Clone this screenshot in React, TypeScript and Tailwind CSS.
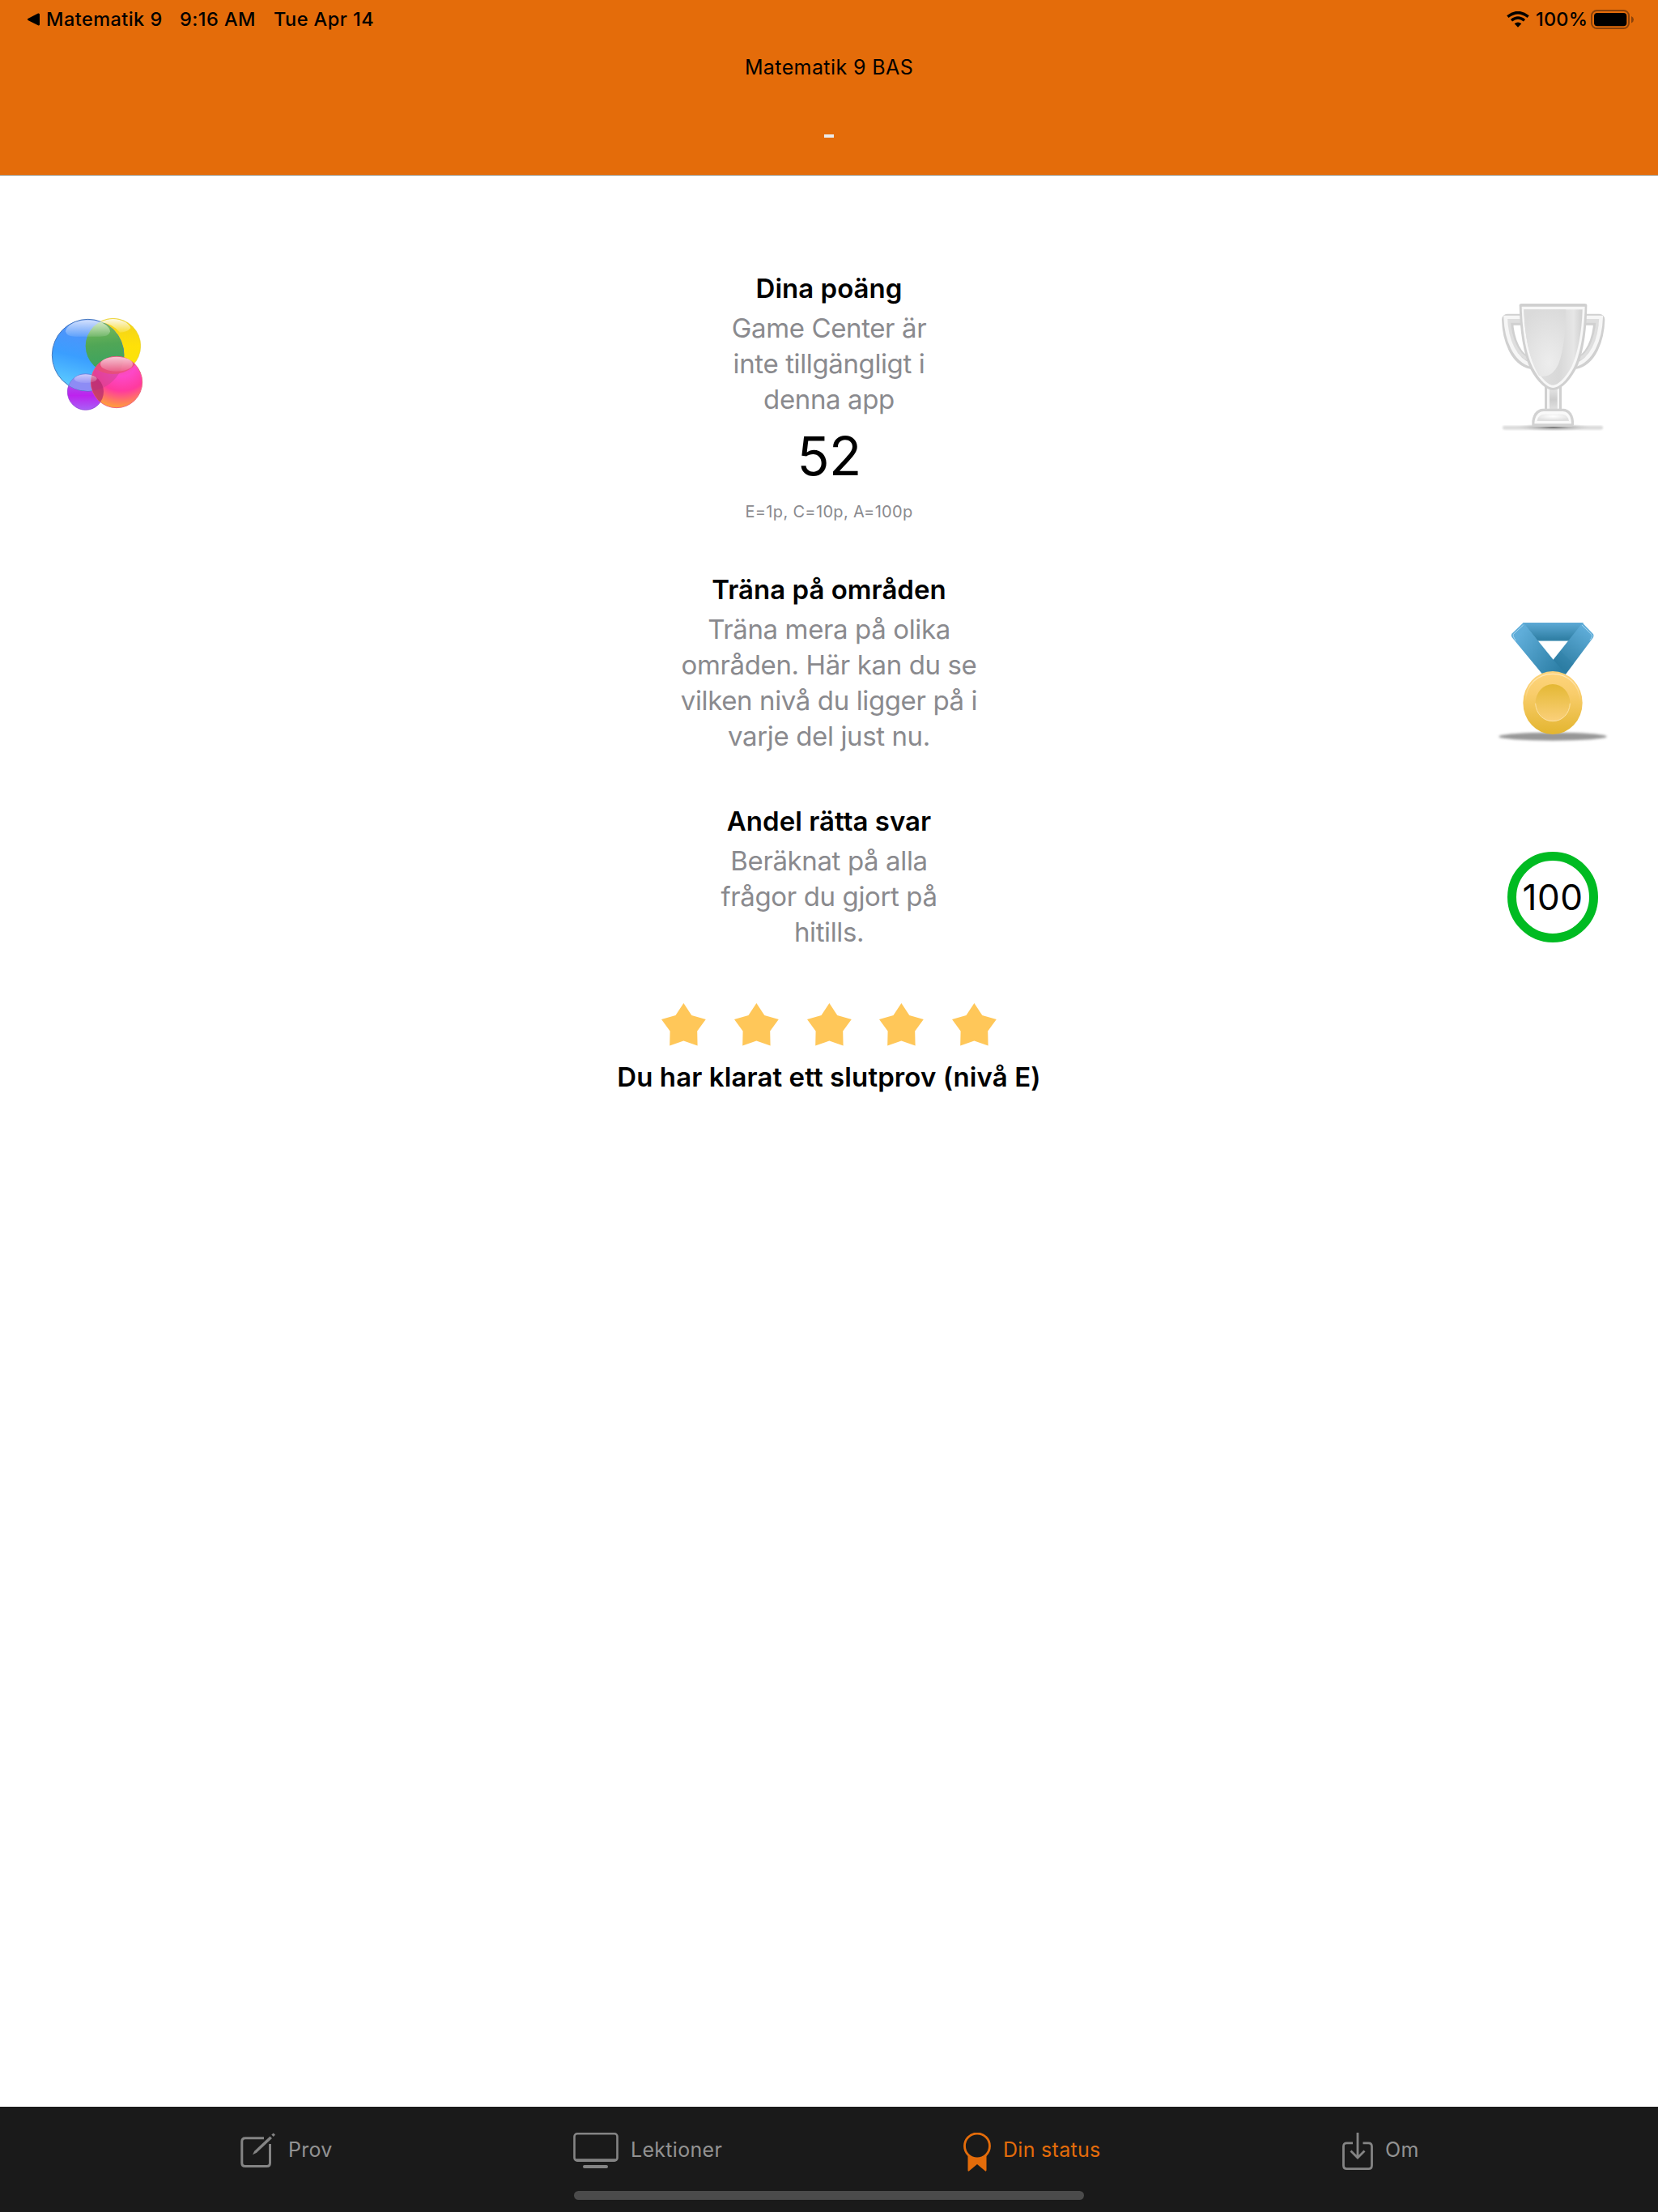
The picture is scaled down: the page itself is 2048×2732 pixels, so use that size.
import type { ReactNode } from "react";

function WifiIcon() {
  return (
    <svg className="w-7 h-5" viewBox="0 0 84 60" fill="none" stroke="#000">
      <path d="M4 20 Q42 -10 80 20" strokeWidth="11" />
      <path d="M18 34 Q42 14 66 34" strokeWidth="10" />
      <path d="M29 46 Q42 35 55 46 L42 59 Z" fill="#000" stroke="none" />
    </svg>
  );
}

function BatteryIcon() {
  return (
    <svg className="w-[53px] h-6" viewBox="0 0 53 24">
      <rect x="1" y="1" width="46" height="22" rx="6.5" fill="none" stroke="#8a420a" strokeWidth="2" />
      <rect x="4" y="4" width="40.3" height="16.3" rx="4" fill="#000" />
      <path d="M50 8 Q53 9.5 53 12.2 Q53 15 50 16.5 Z" fill="#8a420a" />
    </svg>
  );
}

function GameCenterIcon() {
  return (
    <svg className="w-40 h-40" viewBox="0 0 480 480">
      <defs>
        <linearGradient id="gcBlue" x1="0.6" y1="0" x2="0.35" y2="1">
          <stop offset="0" stopColor="#5b8df8" />
          <stop offset="0.55" stopColor="#3a9eff" />
          <stop offset="1" stopColor="#5fd0ff" />
        </linearGradient>
        <linearGradient id="gcYellow" x1="0" y1="0" x2="0" y2="1">
          <stop offset="0" stopColor="#f0d020" />
          <stop offset="0.5" stopColor="#ffe108" />
          <stop offset="1" stopColor="#f8e408" />
        </linearGradient>
        <linearGradient id="gcGreen" x1="0" y1="0" x2="0.1" y2="1">
          <stop offset="0" stopColor="#84c05c" />
          <stop offset="0.5" stopColor="#50a656" />
          <stop offset="1" stopColor="#38a362" />
        </linearGradient>
        <radialGradient id="gcPink" cx="0.6" cy="0.1" r="0.95">
          <stop offset="0" stopColor="#f2549c" />
          <stop offset="0.3" stopColor="#fd48c8" />
          <stop offset="0.6" stopColor="#ff3a9e" />
          <stop offset="0.95" stopColor="#ffa03a" />
        </radialGradient>
        <linearGradient id="gcPurple" x1="0" y1="0" x2="0" y2="1">
          <stop offset="0" stopColor="#a070e8" />
          <stop offset="0.6" stopColor="#bd22ee" />
          <stop offset="1" stopColor="#a860f6" />
        </linearGradient>
        <linearGradient id="gcGloss" x1="0" y1="0" x2="0" y2="1">
          <stop offset="0" stopColor="#fff" stopOpacity="0.9" />
          <stop offset="1" stopColor="#fff" stopOpacity="0.15" />
        </linearGradient>
        <clipPath id="gcClipBlue"><circle cx="206" cy="206" r="133" /></clipPath>
        <clipPath id="gcClipPink"><circle cx="312" cy="306" r="95" /></clipPath>
        <clipPath id="gcClipPurple"><circle cx="197" cy="342" r="67" /></clipPath>
      </defs>
      <circle cx="299" cy="172" r="102" fill="url(#gcYellow)" stroke="#e6cf25" strokeWidth="2" />
      <circle cx="197" cy="342" r="67" fill="url(#gcPurple)" stroke="#8a3bd0" strokeWidth="2" />
      <circle cx="206" cy="206" r="133" fill="url(#gcBlue)" stroke="#4778bd" strokeWidth="3" />
      <g clipPath="url(#gcClipBlue)">
        <circle cx="299" cy="172" r="102" fill="url(#gcGreen)" />
        <circle cx="197" cy="342" r="67" fill="#8d8cf5" stroke="#6a7bd8" strokeWidth="2" />
      </g>
      <path d="M123 118 C126 94 165 76 206 76 C247 76 286 94 288 118 C284 134 270 137 250 137 H160 C138 137 126 132 123 118Z" fill="url(#gcGloss)" opacity="0.8" />
      <path d="M250 84 Q300 60 346 84 Q364 97 364 106 Q350 122 324 122 Q296 88 250 84Z" fill="url(#gcGloss)" />
      <circle cx="312" cy="306" r="95" fill="url(#gcPink)" stroke="#ee6580" strokeWidth="3" />
      <g clipPath="url(#gcClipPink)">
        <circle cx="206" cy="206" r="133" fill="#cc4590" opacity="0.55" />
        <ellipse cx="299" cy="190" rx="102" ry="86" fill="#e8506e" opacity="0.75" />
        <circle cx="197" cy="342" r="67" fill="#b52870" opacity="0.75" />
      </g>
      <g clipPath="url(#gcClipPurple)">
        <ellipse cx="197" cy="293" rx="42" ry="16" fill="url(#gcGloss)" opacity="0.6" />
      </g>
      <ellipse cx="312" cy="239" rx="60" ry="27" fill="url(#gcGloss)" opacity="0.75" />
    </svg>
  );
}

function TrophyIcon() {
  return (
    <svg className="w-[180px] h-[200px]" viewBox="0 0 540 600">
      <defs>
        <linearGradient id="trCup" x1="0" y1="0" x2="1" y2="0">
          <stop offset="0" stopColor="#d2d2d2" />
          <stop offset="0.3" stopColor="#dedede" />
          <stop offset="0.6" stopColor="#d8d8d8" />
          <stop offset="0.85" stopColor="#e6e6e6" />
          <stop offset="1" stopColor="#d0d0d0" />
        </linearGradient>
        <radialGradient id="trShine" cx="0.6" cy="0.8" r="0.85">
          <stop offset="0" stopColor="#ededed" />
          <stop offset="1" stopColor="#dadada" />
        </radialGradient>
        <linearGradient id="trStem" x1="0" y1="0" x2="0" y2="1">
          <stop offset="0" stopColor="#e6e6e6" />
          <stop offset="0.5" stopColor="#cdcdcd" />
          <stop offset="1" stopColor="#e4e4e4" />
        </linearGradient>
        <radialGradient id="trBase" cx="0.5" cy="0.3" r="0.6">
          <stop offset="0" stopColor="#fff" />
          <stop offset="1" stopColor="#e0e0e0" />
        </radialGradient>
        <radialGradient id="trShadow">
          <stop offset="0" stopColor="#6a6a6a" />
          <stop offset="0.4" stopColor="#9a9a9a" stopOpacity="0.6" />
          <stop offset="1" stopColor="#d0d0d0" stopOpacity="0" />
        </radialGradient>
        <filter id="trBlur"><feGaussianBlur stdDeviation="3" /></filter>
      </defs>
      <rect x="78" y="527" width="372" height="15" rx="7" fill="#dcdcdc" filter="url(#trBlur)" />
      <ellipse cx="266" cy="533" rx="140" ry="15" fill="url(#trShadow)" />
      {/* handles */}
      <path d="M150 134 H96 C98 210 128 285 185 297" fill="none" stroke="#d0d0d0" strokeWidth="42" strokeLinejoin="round" />
      <path d="M384 134 H436 C434 210 404 285 347 297" fill="none" stroke="#d0d0d0" strokeWidth="42" strokeLinejoin="round" />
      <path d="M150 140 H102 C106 204 132 266 172 280" fill="none" stroke="#dedede" strokeWidth="12" />
      <path d="M384 140 H430 C426 204 400 266 360 280" fill="none" stroke="#dedede" strokeWidth="12" />
      <path d="M150 126 H89 C92 210 124 285 185 303" fill="none" stroke="#f6f6f6" strokeWidth="14" />
      <path d="M384 126 H443 C440 210 408 285 347 303" fill="none" stroke="#f6f6f6" strokeWidth="14" />
      {/* stem and foot */}
      <rect x="234" y="375" width="63" height="100" fill="#d0d0d0" />
      <rect x="243" y="375" width="45" height="100" fill="#f6f6f6" />
      <rect x="252" y="385" width="29" height="90" fill="url(#trStem)" />
      <path d="M187 529 V510 C190 484 206 464 228 464 H302 C324 464 340 484 342 510 V523 Q342 529 334 531 H194 Z" fill="#d2d2d2" />
      <path d="M196 520 C197 490 212 474 230 474 H300 C320 474 332 490 333 520 Z" fill="#fafafa" />
      <path d="M206 510 C208 494 218 485 234 485 H298 C314 485 322 496 324 510 Z" fill="url(#trBase)" />
      {/* cup */}
      <path d="M140 82 Q140 75 148 75 H383 Q391 75 391 82 C390 180 375 270 350 318 C320 372 288 396 265 396 C242 396 208 370 180 316 C156 262 142 180 140 82Z" fill="#d0d0d0" />
      <path d="M149 86 H383 C380 185 365 265 342 312 C315 363 285 387 265 387 C246 387 216 362 190 312 C166 262 152 190 149 86Z" fill="#f7f7f7" />
      <path d="M157 97 H374 C372 180 357 260 334 308 C310 352 283 377 265 377 C250 377 222 356 198 308 C173 260 160 180 157 97Z" fill="url(#trCup)" />
      <path d="M157 97 H312 C312 180 304 250 285 299 C268 334 245 351 213 342 C173 280 160 180 157 97Z" fill="url(#trShine)" />
    </svg>
  );
}

function MedalIcon() {
  return (
    <svg className="w-[180px] h-[180px]" viewBox="0 0 540 540">
      <defs>
        <linearGradient id="mdTop" x1="0" y1="0" x2="0" y2="1">
          <stop offset="0" stopColor="#5daad6" />
          <stop offset="1" stopColor="#2b7ba0" />
        </linearGradient>
        <linearGradient id="mdLeft" gradientUnits="userSpaceOnUse" x1="130" y1="120" x2="290" y2="230">
          <stop offset="0" stopColor="#5fadd9" />
          <stop offset="1" stopColor="#2d7fa6" />
        </linearGradient>
        <linearGradient id="mdRight" gradientUnits="userSpaceOnUse" x1="390" y1="80" x2="290" y2="230">
          <stop offset="0" stopColor="#5fadd9" />
          <stop offset="1" stopColor="#2a7a9f" />
        </linearGradient>
        <linearGradient id="mdGold" x1="0" y1="0" x2="0" y2="1">
          <stop offset="0" stopColor="#fdd47c" />
          <stop offset="0.35" stopColor="#f9cd6c" />
          <stop offset="1" stopColor="#e3b52f" />
        </linearGradient>
        <linearGradient id="mdInner" x1="0" y1="0" x2="0" y2="1">
          <stop offset="0" stopColor="#e4b834" />
          <stop offset="1" stopColor="#fbd07a" />
        </linearGradient>
        <linearGradient id="mdEdge" x1="0" y1="0" x2="0" y2="1">
          <stop offset="0" stopColor="#ffe9ba" />
          <stop offset="1" stopColor="#ffe9ba" stopOpacity="0" />
        </linearGradient>
        <filter id="mdBlur" x="-10%" y="-60%" width="120%" height="220%"><feGaussianBlur stdDeviation="5" /></filter>
      </defs>
      <ellipse cx="264" cy="479" rx="200" ry="15" fill="#979797" filter="url(#mdBlur)" />
      <path d="M153 57 H378 L325 125 H208Z" fill="url(#mdTop)" />
      <path d="M208 124 H324" stroke="#9cc8dd" strokeWidth="2" />
      <path d="M374 58 L413 98 Q418 104 413 113 L312 248 H225 L266 194Z" fill="url(#mdRight)" />
      <path d="M155 57 L112 98 Q108 104 113 112 L224 246 H312 L266 194Z" fill="url(#mdLeft)" />
      <path d="M266 194 L312 246 L341 210 L292 162Z" fill="#2b7da4" opacity="0.3" />
      <path d="M155 66 L118 100 Q115 106 127 124" fill="none" stroke="#a8d6f0" strokeWidth="3" />
      <path d="M372 66 L408 101 Q413 107 402 122" fill="none" stroke="#a8d6f0" strokeWidth="3" />
      <ellipse cx="264" cy="354" rx="110" ry="117" fill="url(#mdGold)" />
      <path d="M163 348 C165 285 210 247 264 247 C318 247 363 285 366 348" fill="none" stroke="url(#mdEdge)" strokeWidth="4" />
      <ellipse cx="264" cy="354" rx="64" ry="69" fill="url(#mdInner)" />
      <path d="M200 356 C202 396 230 422 264 422 C298 422 326 396 328 356" fill="none" stroke="#fde2a4" strokeWidth="3" />
    </svg>
  );
}

function StarIcon() {
  return (
    <svg className="w-[55px] h-[53px]" viewBox="0 0 55 53" fill="#ffc759">
      <path d="M27.4 0 L37.3 15 L54.8 20 L44.2 34.5 L44.6 52.5 L27.4 46.5 L10.2 52.5 L10.6 34.5 L0 20 L17.5 15Z" />
    </svg>
  );
}

function ProvIcon() {
  return (
    <svg className="w-11 h-12" viewBox="0 0 44 48" fill="none" stroke="#848484" strokeWidth="3">
      <path d="M29 6.8 H6 Q1.8 6.8 1.8 11 V37.5 Q1.8 41.5 6 41.5 H32.5 Q36.5 41.5 36.5 37.5 V14" />
      <path d="M36.5 4.5 L39 7 L20 24.7 L15 27.3 L17.2 22.8Z" fill="#848484" stroke="none" />
      <path d="M38.3 2.6 L40.8 0.5 L43 2.7 L40.8 5.1Z" fill="#848484" stroke="none" />
    </svg>
  );
}

function LektionerIcon() {
  return (
    <svg className="w-14 h-12" viewBox="0 0 56 48" fill="none" stroke="#848484" strokeWidth="2.6">
      <rect x="1.5" y="1.3" width="53" height="33.4" rx="3.5" />
      <path d="M2 33.5 H54" />
      <path d="M14 42 H41" strokeWidth="4" strokeLinecap="round" />
    </svg>
  );
}

function StatusIcon() {
  return (
    <svg className="w-[34px] h-12" viewBox="0 0 34 48" fill="none" stroke="#e46c0a">
      <path d="M5.5 27 Q17 36 28.5 27 V46.5 Q28 48.5 26.5 47 L17 39 L7.5 47 Q5.5 48.5 5.5 46.5Z" fill="#e46c0a" stroke="none" />
      <circle cx="17" cy="16.5" r="15.5" strokeWidth="2.8" fill="#1a1a1a" />
    </svg>
  );
}

function OmIcon() {
  return (
    <svg className="w-[38px] h-12" viewBox="0 0 38 48" fill="none" stroke="#848484" strokeWidth="2.8">
      <path d="M13 12.8 H5.5 Q1.5 12.8 1.5 17 V40.5 Q1.5 44.6 5.5 44.6 H32.5 Q36.5 44.6 36.5 40.5 V17 Q36.5 12.8 32.5 12.8 H25.5" />
      <path d="M19 0 V30 M10.5 22.5 L19 31 L27.5 22.5" />
    </svg>
  );
}

interface StatusSectionProps {
  title: string;
  lines: string[];
  left?: ReactNode;
  right: ReactNode;
  className?: string;
  children?: ReactNode;
}

function StatusSection({ title, lines, left, right, className = "", children }: StatusSectionProps) {
  return (
    <section className={`grid grid-cols-[218px_1fr_218px] items-start ${className}`}>
      <div className="pl-10">{left}</div>
      <div className="flex flex-col items-center text-center">
        <h2 className="text-[33px] leading-[44px] font-semibold tracking-[0.02px]">{title}</h2>
        <p className="mt-[5px] text-[33px] leading-[44px] tracking-[-0.38px] text-[#8a8a8e]">
          {lines.map((line) => (
            <span key={line} className="block">{line}</span>
          ))}
        </p>
        {children}
      </div>
      <div>{right}</div>
    </section>
  );
}

function Tab({ icon, label, className }: { icon: ReactNode; label: string; className: string }) {
  return (
    <div className={`flex items-start gap-[15px] ${className}`}>
      {icon}
      <span className="pt-[5px] text-[25px] leading-[32px] tracking-[0.3px] whitespace-nowrap">{label}</span>
    </div>
  );
}

export default function App() {
  return (
    <div className="flex flex-col w-[2048px] h-[2732px] bg-white text-black font-['Inter',sans-serif] overflow-hidden">
      <header className="h-[217px] bg-[#e46c0a] border-b border-[#a59a8c]">
        <div className="flex h-12 items-center justify-between pl-[34px] pr-[30px] text-[23.5px] leading-[30px] font-medium tracking-[0.45px]">
          <div className="flex items-center whitespace-nowrap">
            <svg className="w-[15px] h-4 mr-2" viewBox="0 0 15 16">
              <path d="M0.5 7 L13 0.5 Q15 0 15 2 V14 Q15 16 13 15.3 L0.5 9 Q-0.5 8 0.5 7Z" />
            </svg>
            <span className="w-[165px]">Matematik 9</span>
            <span className="w-[116px]">9:16 AM</span>
            <span>Tue Apr 14</span>
          </div>
          <div className="flex items-center">
            <WifiIcon />
            <span className="w-[68px] ml-2 whitespace-nowrap tracking-[0.2px]">100%</span>
            <BatteryIcon />
          </div>
        </div>
        <h1 className="mt-[19px] text-center text-[25px] leading-[32px] tracking-[0.4px]">Matematik 9 BAS</h1>
        <div className="mx-auto mt-[67px] w-3 h-1 bg-[#ebebeb]" />
      </header>

      <main className="flex-1 pt-[117px]">
        <StatusSection
          title="Dina poäng"
          lines={["Game Center är", "inte tillgängligt i", "denna app"]}
          left={<div className="pt-9"><GameCenterIcon /></div>}
          right={<div className="pt-4"><TrophyIcon /></div>}
        >
          <div className="mt-2 text-[66px] leading-[80px] tracking-[-0.8px]">52</div>
          <div className="mt-[17px] text-[20px] leading-6 tracking-[0.33px] text-[#8a8a8e]">E=1p, C=10p, A=100p</div>
        </StatusSection>

        <StatusSection
          className="mt-[62px]"
          title="Träna på områden"
          lines={["Träna mera på olika", "områden. Här kan du se", "vilken nivå du ligger på i", "varje del just nu."]}
          right={<div className="pt-[44px]"><MedalIcon /></div>}
        />

        <StatusSection
          className="mt-[61px]"
          title="Andel rätta svar"
          lines={["Beräknat på alla", "frågor du gjort på", "hitills."]}
          right={
            <div className="mt-[60px] ml-8 flex size-28 items-center justify-center rounded-full border-[11px] border-[#00bb22]">
              <span className="text-[44px] leading-[54px] tracking-[0.5px]">100</span>
            </div>
          }
        />

        <div className="mt-[66px] flex justify-center gap-[34.6px]">
          {[1, 2, 3, 4, 5].map((n) => (
            <StarIcon key={n} />
          ))}
        </div>
        <p className="mt-4 text-center text-[33px] leading-[44px] font-semibold tracking-[0.1px]">
          Du har klarat ett slutprov (nivå E)
        </p>
      </main>

      <nav className="flex flex-col h-[130px] bg-[#1a1a1a] text-[#929292]">
        <div className="flex h-[104px] pt-8">
          <Tab className="ml-[297px] w-[411px]" icon={<ProvIcon />} label="Prov" />
          <Tab className="w-[482px]" icon={<LektionerIcon />} label="Lektioner" />
          <Tab className="w-[468px] text-[#e46c0a]" icon={<StatusIcon />} label="Din status" />
          <Tab icon={<OmIcon />} label="Om" className="" />
        </div>
        <div className="mx-auto w-[630px] h-[11px] rounded-full bg-[#4b4b4b]" />
      </nav>
    </div>
  );
}
